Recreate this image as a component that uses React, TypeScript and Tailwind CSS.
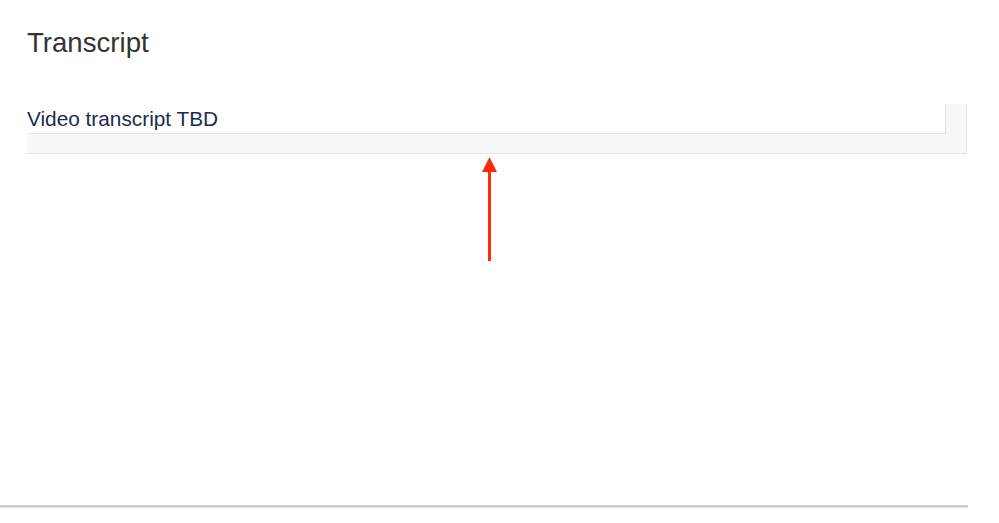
export default function App() {
  return (
    <div className="relative h-[523px] w-[999px] overflow-hidden bg-white font-['Liberation_Sans',Arial,sans-serif]">
      <div className="w-[967px] pl-[27px] pt-[27px]">
        <h2 className="text-[27.6px] leading-[32px] font-normal text-[#333333]">Transcript</h2>

        <div className="mt-[45px] border-r border-b border-[#e6e6e6] bg-[#f7f7f7] pr-[20px] pb-[19px]">
          <div className="border-r border-b border-[#e2e2e2] bg-white pt-[3px] pb-[2px]">
            <p className="text-[20.8px] leading-[24px] text-[#1b2c52]">Video transcript TBD</p>
          </div>
        </div>
      </div>

      <div className="mt-[351px] h-[3px] w-[968px] border-t-2 border-b border-t-[#c8c8c8] border-b-[#e4e4e4]" />

      {/* annotation arrow */}
      <svg
        className="absolute left-[482px] top-[157px]"
        width="15"
        height="104"
        viewBox="0 0 15 104"
      >
        <polygon points="7.5,0 0,15 15,15" fill="#ff2a0a" />
        <rect x="6" y="12" width="3" height="92" fill="#ff2a0a" />
      </svg>
    </div>
  );
}
